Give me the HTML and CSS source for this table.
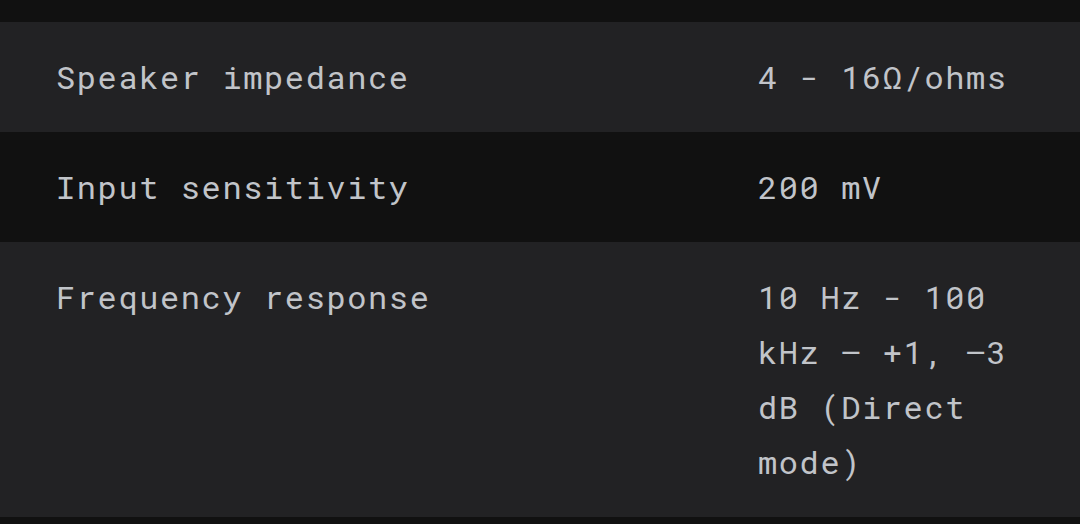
FILE: index.html
```html
<!DOCTYPE html>
<html lang="en">
<head>
<meta charset="utf-8">
<title>Specifications</title>
<link rel="stylesheet" href="styles.css">
</head>
<body>
<div class="specs">
  <div class="row alt">
    <div class="label">Speaker impedance</div>
    <div class="value">4 - 16Ω/ohms</div>
  </div>
  <div class="row">
    <div class="label">Input sensitivity</div>
    <div class="value">200 mV</div>
  </div>
  <div class="row alt">
    <div class="label">Frequency response</div>
    <div class="value">10 Hz - 100 kHz – +1, –3 dB (Direct mode)</div>
  </div>
</div>
</body>
</html>
```

FILE: styles.css
```css
html, body {
  margin: 0;
  padding: 0;
  background: #111111;
}

body {
  font-family: "Roboto Mono", "DejaVu Sans Mono", "Liberation Mono", monospace;
  font-size: 32px;
  letter-spacing: 0.05em;
  line-height: 55px;
  color: #c1c4c9;
  overflow: hidden;
  height: 524px;
}

.specs {
  margin-top: 22px;
  display: flex;
  flex-direction: column;
}

.row {
  display: grid;
  grid-template-columns: 65% 35%;
  padding: 27px 0 28px;
  background: #111111;
}

.row.alt {
  background: #222224;
}

.label {
  padding-left: 56px;
}

.value {
  padding: 0 56px;
}
```
